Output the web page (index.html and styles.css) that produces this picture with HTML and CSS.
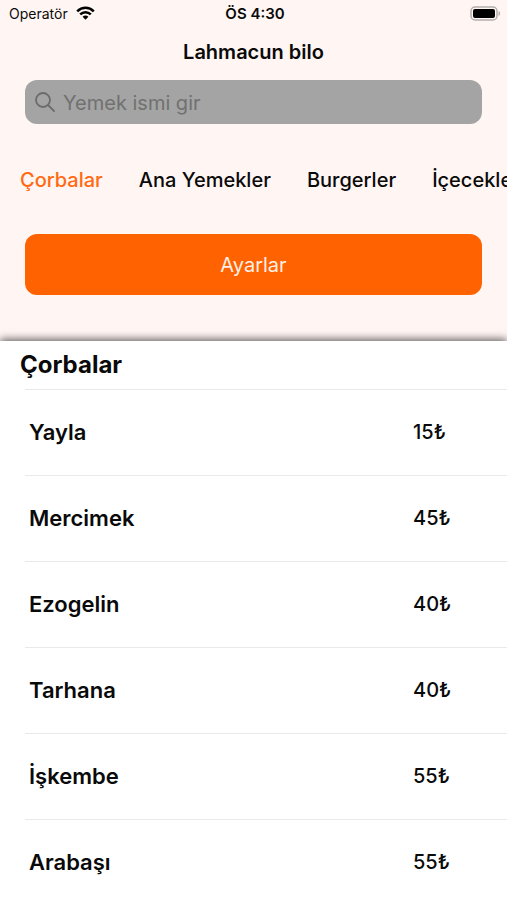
FILE: index.html
```
<!DOCTYPE html>
<html lang="tr">
<head>
    <meta charset="UTF-8">
    <meta name="viewport" content="width=device-width, initial-scale=1">
    <title>Lahmacun bilo</title>
    <link rel="stylesheet" href="styles.css">
</head>
<body>
    <header class="header">

        <div class="status-bar">
            <div class="carrier">
                <span>Operatör</span>
                <svg width="19" height="14" viewBox="0 0 19 14" fill="none" stroke="#000000" stroke-width="2.5">
                    <path d="M1.2 5.3C5.9 0.6 13.1 0.6 17.8 5.3"/>
                    <path d="M4.2 8.4C7.2 5.4 11.8 5.4 14.8 8.4"/>
                    <path d="M9.5 13.7L6.6 10.8C8.2 9.2 10.8 9.2 12.4 10.8Z" fill="#000000" stroke="none"/>
                </svg>
            </div>
            <span class="clock">ÖS 4:30</span>
            <div class="battery">
                <svg width="31" height="15" viewBox="0 0 31 15">
                    <rect x="1" y="1" width="26" height="13" rx="4" fill="none" stroke="#b3adac" stroke-width="1.5"/>
                    <rect x="3" y="3" width="22" height="9" rx="2" fill="#000000"/>
                    <path d="M28.5 5C30.7 6 30.7 9 28.5 10Z" fill="#b3adac"/>
                </svg>
            </div>
        </div>

        <h1>Lahmacun bilo</h1>

        <form class="search">
            <label for="searchFood">
                <svg width="20" height="20" viewBox="0 0 20 20" fill="none" stroke="#6c6c6c" stroke-width="1.8" stroke-linecap="round">
                    <circle cx="8" cy="8" r="7"/>
                    <path d="M13 13L19 19"/>
                </svg>
            </label>
            <input type="text" id="searchFood" name="searchFood" placeholder="Yemek ismi gir" aria-label="Yemek ismi gir">
        </form>

        <!-- scrolls sideways when the categories do not fit -->
        <nav class="categories">
            <a class="active" href="#corbalar">Çorbalar</a>
            <a href="#ana-yemekler">Ana Yemekler</a>
            <a href="#burgerler">Burgerler</a>
            <a href="#icecekler">İçecekler</a>
        </nav>

        <button type="button" class="settings">Ayarlar</button>

    </header>

    <main class="menu" id="corbalar">
        <h2>Çorbalar</h2>
        <ul class="menu-list">
            <li>
                <span class="food">Yayla</span>
                <span class="price">15₺</span>
            </li>
            <li>
                <span class="food">Mercimek</span>
                <span class="price">45₺</span>
            </li>
            <li>
                <span class="food">Ezogelin</span>
                <span class="price">40₺</span>
            </li>
            <li>
                <span class="food">Tarhana</span>
                <span class="price">40₺</span>
            </li>
            <li>
                <span class="food">İşkembe</span>
                <span class="price">55₺</span>
            </li>
            <li>
                <span class="food">Arabaşı</span>
                <span class="price">55₺</span>
            </li>
        </ul>
    </main>
</body>
</html>
```
FILE: styles.css
```
* {
    box-sizing: border-box;
}

body {
    margin: 0;
    background-color: #FFFFFF;
    color: #0a0a0a;
    font-family: Inter, "Liberation Sans", sans-serif;
    overflow-x: hidden;
}

.header {
    display: flex;
    flex-direction: column;
    background-color: #fff6f4;
    padding-bottom: 46px;
}

.status-bar {
    display: grid;
    grid-template-columns: 1fr auto 1fr;
    align-items: center;
    height: 26px;
    padding: 0 6px 0 9px;
    font-size: 14px;
}

.carrier {
    display: flex;
    align-items: center;
    gap: 8px;
}

.clock {
    font-size: 15px;
    font-weight: 600;
}

.battery {
    display: flex;
    justify-content: flex-end;
}

h1 {
    margin: 14px 0 16px;
    font-size: 20px;
    line-height: 24px;
    font-weight: 600;
    text-align: center;
}

.search {
    display: flex;
    align-items: center;
    gap: 8px;
    height: 44px;
    margin: 0 25px;
    padding: 0 10px;
    border-radius: 12px;
    background-color: #a4a4a4;
}

.search label {
    display: flex;
}

.search input {
    flex: 1;
    min-width: 0;
    padding: 2px 0 0;
    border: none;
    outline: none;
    background: none;
    font-family: inherit;
    font-size: 20px;
}

.search input::placeholder {
    color: #717171;
    opacity: 1;
}

.categories {
    display: flex;
    gap: 36px;
    margin: 44px 0 42px;
    padding-left: 20px;
    overflow-x: auto;
    scrollbar-width: none;
    white-space: nowrap;
}

.categories a {
    color: #0a0a0a;
    font-size: 20px;
    line-height: 24px;
    font-weight: 500;
    text-decoration: none;
}

.categories .active {
    color: #ff6a13;
}

.settings {
    height: 61px;
    margin: 0 25px;
    border: none;
    border-radius: 12px;
    background-color: #ff6200;
    color: #fff0e6;
    font-family: inherit;
    font-size: 20px;
    cursor: pointer;
}

.menu {
    background-color: #FFFFFF;
    box-shadow: 0 -2px 8px rgba(0, 0, 0, 0.6);
}

h2 {
    margin: 0;
    padding: 10px 20px;
    font-size: 24px;
    line-height: 28px;
    font-weight: 700;
}

.menu-list {
    margin: 0 0 0 25px;
    padding: 0;
    list-style: none;
}

.menu-list li {
    display: flex;
    align-items: center;
    height: 86px;
    padding: 0 0 2px 4px;
    border-top: 1px solid #e9e9e9;
}

.food {
    flex: 1;
    font-size: 22px;
    font-weight: 600;
}

.price {
    width: 94px;
    font-size: 20px;
    font-weight: 500;
}
```
